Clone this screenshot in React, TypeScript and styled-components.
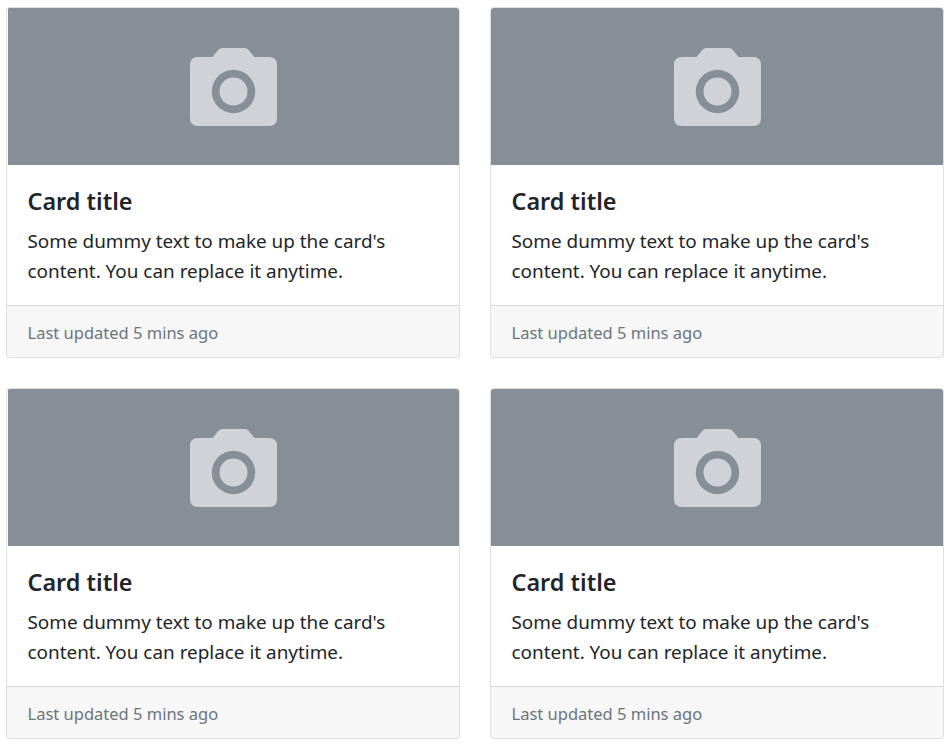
import styled, { createGlobalStyle } from 'styled-components'

const cards = [1, 2, 3, 4]

export default function App() {
  return (
    <>
      <GlobalStyle />
      <Grid>
        {cards.map(id => (
          <Card key={id}>
            <Thumb>
              <CameraIcon />
            </Thumb>
            <Body>
              <Title>Card title</Title>
              <Text>Some dummy text to make up the card's content. You can replace it anytime.</Text>
            </Body>
            <Footer>Last updated 5 mins ago</Footer>
          </Card>
        ))}
      </Grid>
    </>
  )
}

function CameraIcon() {
  return (
    <svg width="87" height="78" viewBox="0 0 87 78">
      <path
        fillRule="evenodd"
        fill="#cfd3d8"
        d="M8 9H22.5L28 2.2Q29.8 0 32.5 0H54.5Q57.2 0 59 2.2L64.500 9H79Q87 9 87 17V70Q87 78 79 78H8Q0 78 0 70V17Q0 9 8 9ZM43.500 21.800A21.700 21.700 0 1 0 43.500 65.200A21.700 21.700 0 1 0 43.500 21.800ZM43.500 29.500A14 14 0 1 1 43.500 57.500A14 14 0 1 1 43.500 29.500Z"
      />
    </svg>
  )
}

const GlobalStyle = createGlobalStyle`
  body {
    margin: 0;
    background: #fff;
    font-family: "Noto Sans", "Open Sans", sans-serif;
    color: #212529;
  }
`

const Grid = styled.div`
  display: grid;
  grid-template-columns: 1fr 1fr;
  gap: 30px;
  padding: 7px 6px 0;
`

const Thumb = styled.div`
  height: 157px;
  background: #868e96;
  display: flex;
  align-items: center;
  justify-content: center;
`

const Card = styled.div`
  display: flex;
  flex-direction: column;
  background: #fff;
  border: 1px solid rgba(0, 0, 0, 0.125);
  border-radius: 4px;
  overflow: hidden;

  &:nth-child(odd) ${Thumb} {
    margin-left: 1px;
  }
`

const Body = styled.div`
  padding: 20px 20px 19px 20.5px;
`

const Title = styled.h5`
  margin: 0 0 8px;
  font-size: 23.4px;
  line-height: 33px;
  font-weight: 600;
  color: #212529;
`

const Text = styled.p`
  margin: 0;
  font-size: 18.9px;
  line-height: 30px;
`

const Footer = styled.div`
  padding: 13px 20px 11px 20.5px;
  font-size: 16.5px;
  line-height: 27px;
  color: #6c757d;
  background: rgba(0, 0, 0, 0.03);
  border-top: 1px solid rgba(0, 0, 0, 0.125);
`
